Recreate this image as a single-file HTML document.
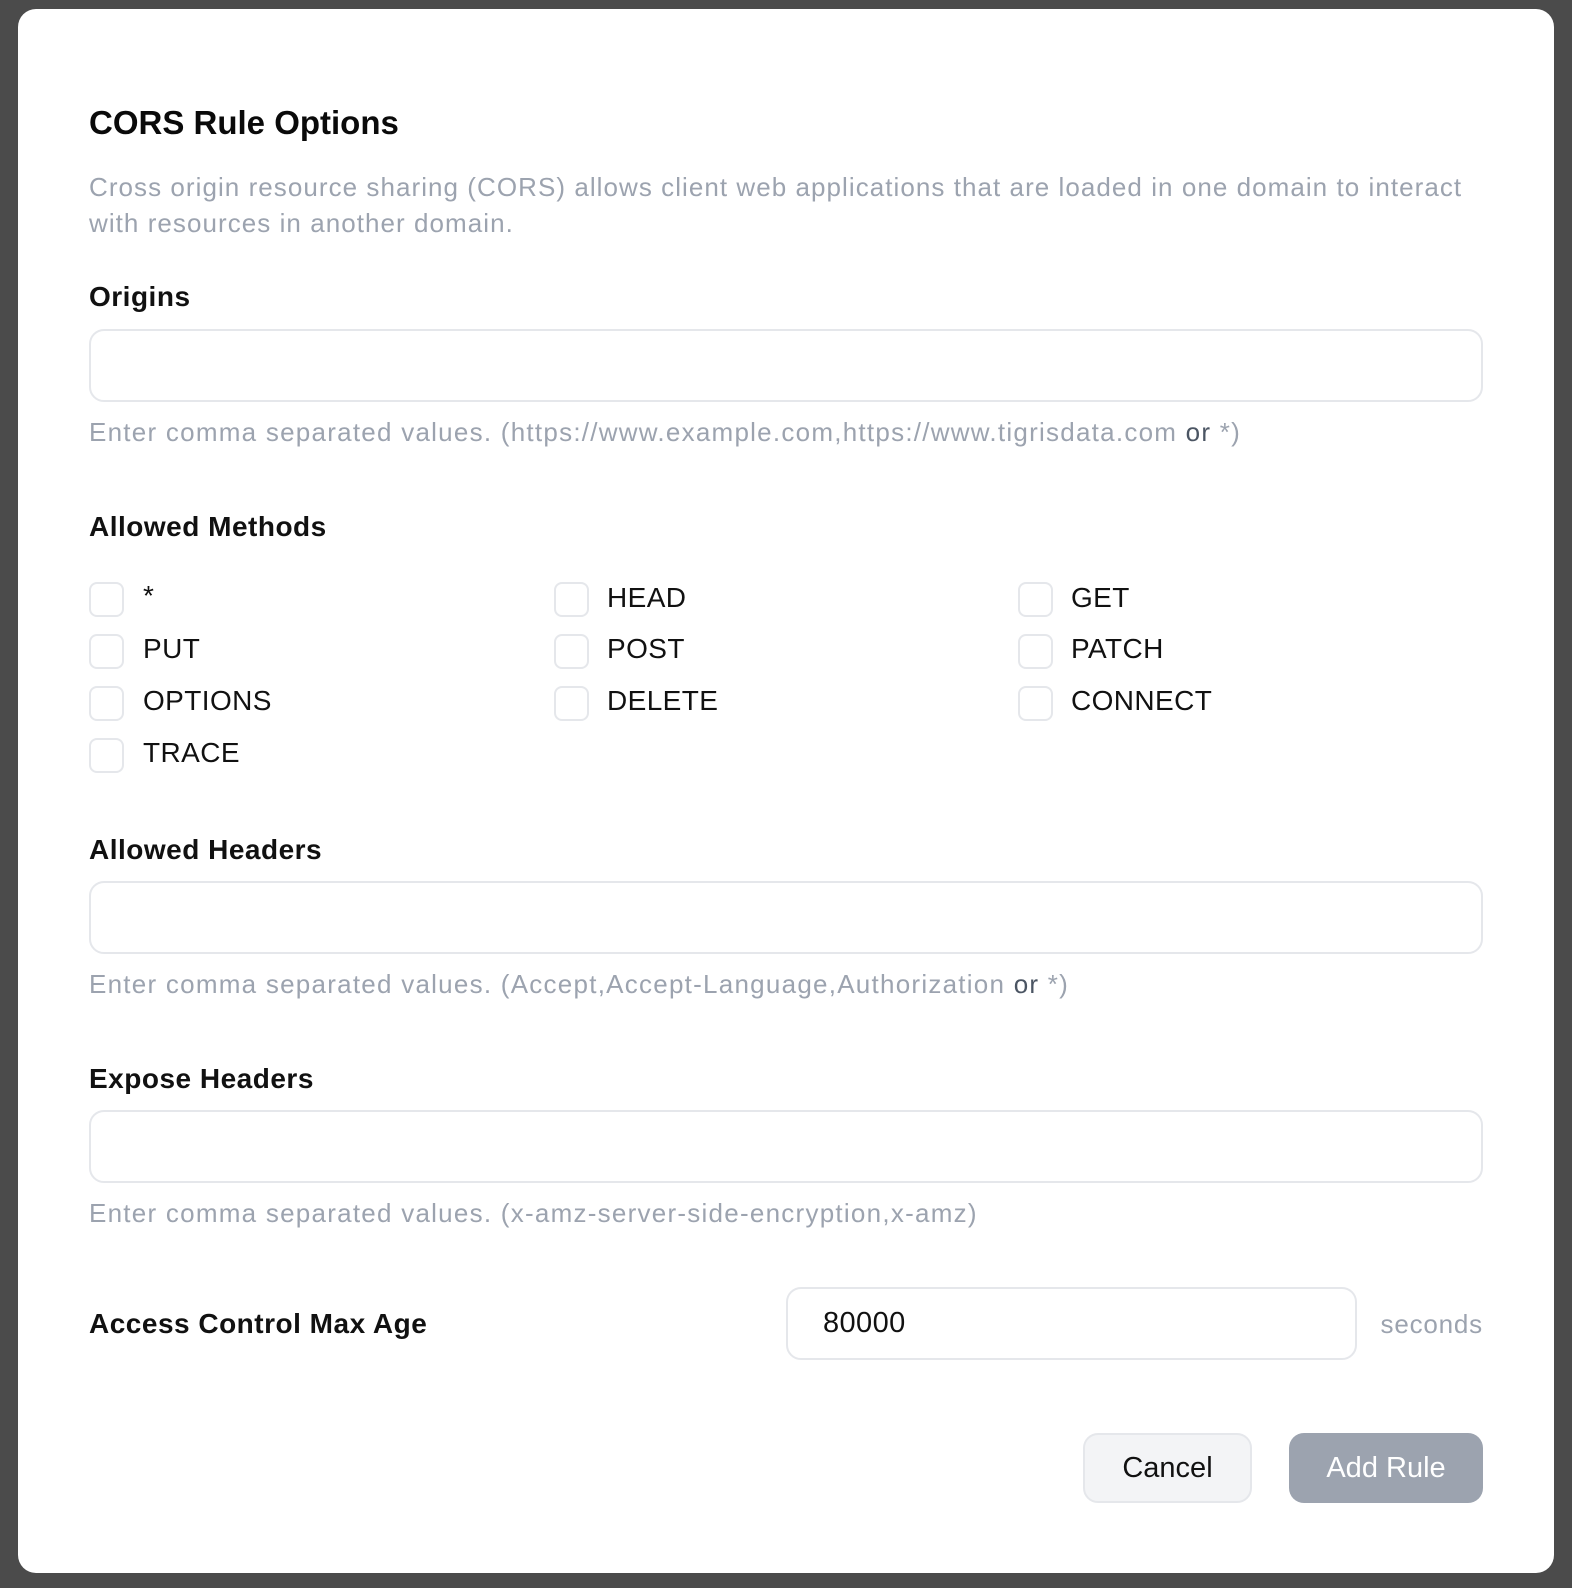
<!DOCTYPE html>
<html><head><meta charset="utf-8">
<style>
*{box-sizing:border-box;margin:0;padding:0}
html,body{width:1572px;height:1588px;overflow:hidden}
body{background:#4b4b4b;font-family:"Liberation Sans",Arial,sans-serif;position:relative}
.modal{position:absolute;left:18px;top:9px;width:1536px;height:1564px;background:#fff;border-radius:18px}
.a{position:absolute;white-space:nowrap}
.t{left:89px;font-size:33px;font-weight:bold;color:#0a0a0a}
.d{left:89px;font-size:26px;color:#9ca3af;line-height:36px;letter-spacing:1.05px}
.l{left:89px;font-size:28px;color:#111;font-weight:bold;letter-spacing:0.5px}
.in{position:absolute;left:89px;width:1394px;height:73px;border:2px solid #e5e7eb;border-radius:15px;background:#fff}
.h{font-size:26px;color:#9ca3af;letter-spacing:1.25px}
.h b{font-weight:normal;color:#4b5563}
.cb{position:absolute;width:35px;height:35px;border:2px solid #e5e7eb;border-radius:8px}
.m{font-size:28px;color:#111;letter-spacing:0.4px}
</style></head><body>
<div class="modal"></div>
<div class="a t" style="top:104px">CORS Rule Options</div>
<div class="a d" style="top:169px">Cross origin resource sharing (CORS) allows client web applications that are loaded in one domain to interact<br>with resources in another domain.</div>

<div class="a l" style="top:281px">Origins</div>
<div class="in" style="top:329px"></div>
<div class="a h" style="left:89px;top:417px">Enter comma separated values. (https://www.example.com,https://www.tigrisdata.com <b>or</b> *)</div>

<div class="a l" style="top:511px">Allowed Methods</div>
<div class="cb" style="left:89px;top:582px"></div><div class="a m" style="left:143px;top:580px">*</div>
<div class="cb" style="left:554px;top:582px"></div><div class="a m" style="left:607px;top:582px">HEAD</div>
<div class="cb" style="left:1018px;top:582px"></div><div class="a m" style="left:1071px;top:582px">GET</div>
<div class="cb" style="left:89px;top:634px"></div><div class="a m" style="left:143px;top:633px">PUT</div>
<div class="cb" style="left:554px;top:634px"></div><div class="a m" style="left:607px;top:633px">POST</div>
<div class="cb" style="left:1018px;top:634px"></div><div class="a m" style="left:1071px;top:633px">PATCH</div>
<div class="cb" style="left:89px;top:686px"></div><div class="a m" style="left:143px;top:685px">OPTIONS</div>
<div class="cb" style="left:554px;top:686px"></div><div class="a m" style="left:607px;top:685px">DELETE</div>
<div class="cb" style="left:1018px;top:686px"></div><div class="a m" style="left:1071px;top:685px">CONNECT</div>
<div class="cb" style="left:89px;top:738px"></div><div class="a m" style="left:143px;top:737px">TRACE</div>

<div class="a l" style="top:834px">Allowed Headers</div>
<div class="in" style="top:881px"></div>
<div class="a h" style="left:89px;top:969px">Enter comma separated values. (Accept,Accept-Language,Authorization <b>or</b> *)</div>

<div class="a l" style="top:1063px">Expose Headers</div>
<div class="in" style="top:1110px"></div>
<div class="a h" style="left:89px;top:1198px">Enter comma separated values. (x-amz-server-side-encryption,x-amz)</div>

<div class="a l" style="top:1308px">Access Control Max Age</div>
<div class="in" style="top:1287px;left:786px;width:571px"></div>
<div class="a m" style="left:823px;top:1307px;font-size:29px">80000</div>
<div class="a h" style="right:89px;top:1309px;letter-spacing:0.8px">seconds</div>

<div class="a" style="left:1083px;top:1433px;width:169px;height:70px;border:2px solid #e5e7eb;border-radius:15px;background:#f3f4f6;font-size:29px;color:#111;text-align:center;line-height:66px">Cancel</div>
<div class="a" style="left:1289px;top:1433px;width:194px;height:70px;border-radius:15px;background:#9ca3af;font-size:29px;color:#fff;text-align:center;line-height:70px">Add Rule</div>
</body></html>
